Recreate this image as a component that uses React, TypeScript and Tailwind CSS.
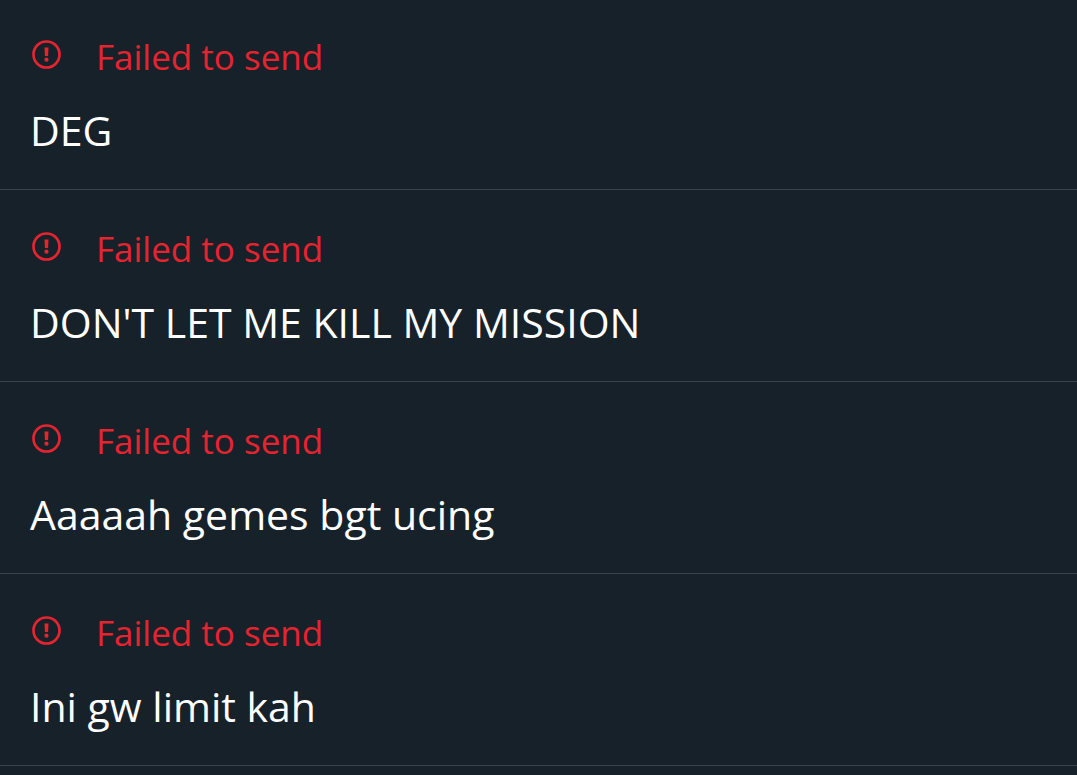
import React from "react";

const drafts = [
  { id: 1, text: "DEG" },
  { id: 2, text: "DON'T LET ME KILL MY MISSION" },
  { id: 3, text: "Aaaaah gemes bgt ucing" },
  { id: 4, text: "Ini gw limit kah" },
];

const ErrorIcon = () => (
  <svg
    viewBox="0 0 32 32"
    className="size-8 shrink-0"
    fill="none"
    aria-hidden="true"
  >
    <circle cx="16.5" cy="15.5" r="13" stroke="currentColor" strokeWidth="2.7" />
    <path d="M14.5 8.6h4l-.4 8.4h-3.2z" fill="currentColor" />
    <circle cx="16.5" cy="20.7" r="2.1" fill="currentColor" />
  </svg>
);

const DraftItem = ({ text }: { text: string }) => (
  <li className="border-b border-[#39444d] px-[30px] pt-9 pb-8 first:pt-[34px]">
    <div className="flex items-start gap-[34px] pt-[5px] text-[#e6242f]">
      <ErrorIcon />
      <p className="text-[35px] leading-[36px]">Failed to send</p>
    </div>
    <p className="mt-[29px] text-[41px] leading-[53px] text-white">{text}</p>
  </li>
);

export default function App() {
  return (
    <main className="min-h-screen bg-[#17212a] font-['Open_Sans',sans-serif]">
      <ul>
        {drafts.map((draft) => (
          <DraftItem key={draft.id} text={draft.text} />
        ))}
      </ul>
    </main>
  );
}
